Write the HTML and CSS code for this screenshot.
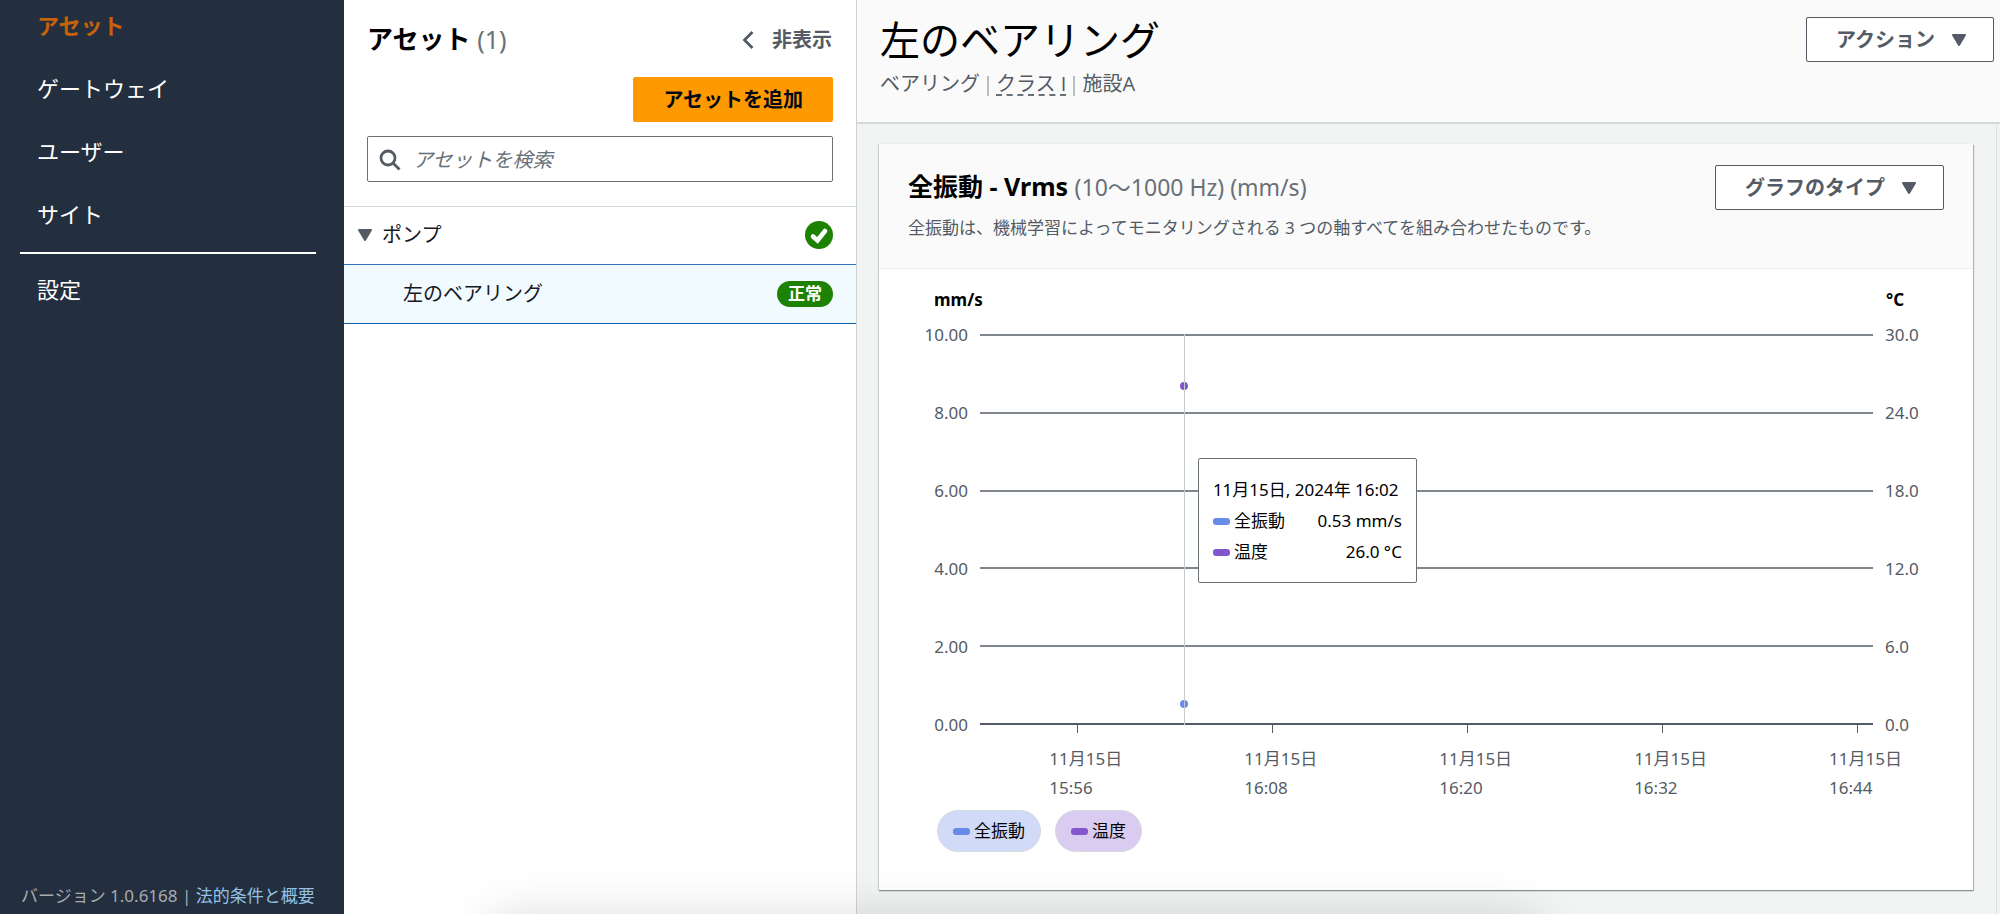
FILE: index.html
```html
<!DOCTYPE html>
<html lang="ja">
<head>
<meta charset="utf-8">
<title>アセット</title>
<link rel="stylesheet" href="styles.css">
</head>
<body>
<div class="app">
  <nav class="sidebar">
    <ul class="nav">
      <li><a class="nav-link active" href="#">アセット</a></li>
      <li><a class="nav-link" href="#">ゲートウェイ</a></li>
      <li><a class="nav-link" href="#">ユーザー</a></li>
      <li><a class="nav-link" href="#">サイト</a></li>
    </ul>
    <hr class="nav-rule">
    <ul class="nav">
      <li><a class="nav-link" href="#">設定</a></li>
    </ul>
    <footer class="version">バージョン 1.0.6168 | <a class="legal" href="#">法的条件と概要</a></footer>
  </nav>

  <section class="assets">
    <header class="assets-head">
      <div class="assets-title-row">
        <h2 class="assets-title">アセット <span class="count">(1)</span></h2>
        <button class="hide-button" type="button">
          <svg class="icon" viewBox="0 0 20 20" aria-hidden="true"><path d="M13.500 2 L5.500 10 L13.500 18" fill="none" stroke="currentColor" stroke-width="2.800"/></svg>
          非表示
        </button>
      </div>
      <button class="add-button" type="button">アセットを追加</button>
      <label class="search">
        <svg class="search-icon" viewBox="0 0 22 22" aria-hidden="true"><circle cx="9" cy="9" r="7" fill="none" stroke="currentColor" stroke-width="2.800"/><path d="M14 14 L20.500 20.500" stroke="currentColor" stroke-width="2.800"/></svg>
        <input class="search-input" type="text" placeholder="アセットを検索" aria-label="アセットを検索">
      </label>
    </header>
    <div class="tree-row">
      <svg class="caret" viewBox="0 0 14 12" aria-hidden="true"><path d="M1 1 H13 L7 11 Z" fill="currentColor" stroke="currentColor" stroke-width="2" stroke-linejoin="round"/></svg>
      <span class="tree-name">ポンプ</span>
      <svg class="check" viewBox="0 0 28 28" role="img" aria-label="正常"><circle cx="14" cy="14" r="14" fill="#1d8102"/><path d="M8 15.500 L12.500 19.500 L20 10" fill="none" stroke="#fff" stroke-width="4.600" stroke-linecap="round"/></svg>
    </div>
    <div class="tree-row selected">
      <span class="tree-name child">左のベアリング</span>
      <span class="badge">正常</span>
    </div>
  </section>

  <main class="detail">
    <header class="detail-head">
      <div>
        <h1 class="detail-title">左のベアリング</h1>
        <p class="detail-meta"><span>ベアリング</span><span class="bar"></span><span class="class-term">クラス I</span><span class="bar"></span><span>施設A</span></p>
      </div>
      <button class="menu-button" type="button">アクション
        <svg class="caret" viewBox="0 0 14 12" aria-hidden="true"><path d="M1 1 H13 L7 11 Z" fill="currentColor" stroke="currentColor" stroke-width="2" stroke-linejoin="round"/></svg>
      </button>
    </header>
    <div class="detail-body">
      <article class="card">
        <header class="card-head">
          <div>
            <h2 class="card-title">全振動 - Vrms <span class="units">(10～1000 Hz) (mm/s)</span></h2>
            <p class="card-text">全振動は、機械学習によってモニタリングされる 3 つの軸すべてを組み合わせたものです。</p>
          </div>
          <button class="menu-button" type="button">グラフのタイプ
            <svg class="caret" viewBox="0 0 14 12" aria-hidden="true"><path d="M1 1 H13 L7 11 Z" fill="currentColor" stroke="currentColor" stroke-width="2" stroke-linejoin="round"/></svg>
          </button>
        </header>
        <div class="chart">
          <div class="unit unit-left">mm/s</div>
          <div class="unit unit-right">°C</div>
          <div class="axis axis-left"><span>10.00</span><span>8.00</span><span>6.00</span><span>4.00</span><span>2.00</span><span>0.00</span></div>
          <div class="plot">
            <div class="grid"><i></i><i></i><i></i><i></i><i></i><i class="base"></i></div>
            <span class="dot temp"></span>
            <span class="dot vib"></span>
            <span class="cursor"></span>
            <div class="tooltip">
              <div class="tip-row">11月15日, 2024年 16:02</div>
              <div class="tip-row"><span class="key"><i class="swatch vib"></i>全振動</span><span>0.53 mm/s</span></div>
              <div class="tip-row"><span class="key"><i class="swatch temp"></i>温度</span><span>26.0 °C</span></div>
            </div>
          </div>
          <div class="axis axis-right"><span>30.0</span><span>24.0</span><span>18.0</span><span>12.0</span><span>6.0</span><span>0.0</span></div>
          <div class="time">
            <div class="ticks"><i></i><i></i><i></i><i></i><i></i></div>
            <div class="times">
              <span>11月15日<br>15:56</span><span>11月15日<br>16:08</span><span>11月15日<br>16:20</span><span>11月15日<br>16:32</span><span>11月15日<br>16:44</span>
            </div>
          </div>
        </div>
        <div class="legend">
          <button class="chip chip-vib" type="button"><i class="swatch vib"></i>全振動</button>
          <button class="chip chip-temp" type="button"><i class="swatch temp"></i>温度</button>
        </div>
      </article>
    </div>
  </main>
</div>
<div class="bottom-shade"></div>
</body>
</html>
```
FILE: styles.css
```css
* { box-sizing: border-box; }
body {
  margin: 0;
  font-family: "Noto Sans", "Noto Sans CJK JP", sans-serif;
  font-size: 20px;
  line-height: 28px;
  color: #16191f;
  overflow: hidden;
}
h1, h2, p, ul { margin: 0; padding: 0; }
ul { list-style: none; }
a { text-decoration: none; }
button { font: inherit; cursor: pointer; }

.app { display: flex; min-height: 100vh; }

/* Sidebar */
.sidebar {
  flex: 0 0 344px;
  display: flex;
  flex-direction: column;
  background: #232f3e;
  padding: 0 28px 4px 20px;
}
.nav-link {
  display: block;
  height: 63px;
  padding: 9px 17px;
  font-size: 22px;
  line-height: 32px;
  color: #fff;
}
.nav-link.active { color: #c7610a; font-weight: 700; }
.nav-rule {
  width: 100%;
  height: 2px;
  margin: 0 0 10px;
  border: 0;
  background: #fff;
}
.version {
  margin-top: auto;
  padding-left: 1px;
  font-size: 17px;
  color: #a9abae;
  white-space: nowrap;
}
.legal { color: #94c1e6; }

/* Asset list */
.assets {
  flex: 0 0 513px;
  background: #fff;
  border-right: 1px solid #cdd2d2;
}
.assets-head {
  display: flex;
  flex-direction: column;
  padding: 20px 23px 24px;
  border-bottom: 1px solid #d5dbdb;
}
.assets-title-row {
  display: flex;
  justify-content: space-between;
  align-items: center;
  height: 40px;
  margin-bottom: 17px;
}
.assets-title { font-size: 26px; line-height: 40px; padding-bottom: 3px; color: #000; }
.count { font-size: 25px; font-weight: 400; color: #687078; }
.hide-button {
  display: flex;
  align-items: center;
  gap: 13px;
  padding: 0 1px 0 0;
  border: 0;
  background: none;
  font-weight: 700;
  color: #545b64;
}
.icon { width: 20px; height: 20px; }
.add-button {
  align-self: flex-end;
  height: 45px;
  padding: 0 30px;
  border: 0;
  border-radius: 2px;
  background: #ff9900;
  font-weight: 700;
  color: #000716;
}
.search {
  display: flex;
  align-items: center;
  gap: 12px;
  height: 46px;
  margin-top: 14px;
  padding: 1px 11px 0;
  border: 1px solid #687078;
  border-radius: 2px;
  background: #fff;
}
.search-icon { width: 22px; height: 22px; color: #545b64; }
.search-input {
  flex: 1;
  min-width: 0;
  padding: 0;
  border: 0;
  outline: 0;
  background: none;
  font: inherit;
}
.search-input::placeholder { color: #687078; font-style: italic; }
.tree-row {
  display: flex;
  align-items: center;
  height: 57px;
  padding: 0 23px 2px 14px;
}
.tree-row.selected {
  height: 60px;
  padding-bottom: 0;
  border-top: 1px solid #2f74c0;
  border-bottom: 1px solid #0b5cad;
  background: #f1faff;
}
.caret { width: 14px; height: 12px; color: #545b64; }
.tree-name { flex: 1; padding-left: 10px; }
.tree-name.child { padding-left: 45px; }
.check { width: 28px; height: 28px; }
.badge {
  padding: 0 11px;
  border-radius: 13px;
  background: #1d8102;
  font-size: 17px;
  line-height: 26px;
  font-weight: 700;
  color: #fff;
}

/* Detail */
.detail {
  flex: 1;
  min-width: 0;
  display: flex;
  flex-direction: column;
  background: #f2f3f3;
}
.detail-head {
  display: flex;
  justify-content: space-between;
  align-items: flex-start;
  padding: 12px 6px 26px 23px;
  border-bottom: 2px solid #d5d9d9;
  background: #fafafa;
}
.detail-head .menu-button { margin-top: 5px; }
.detail-title { font-size: 40px; line-height: 56px; font-weight: 400; color: #000; }
.detail-meta {
  display: flex;
  gap: 7px;
  height: 28px;
  font-family: "Open Sans", "Noto Sans CJK JP", sans-serif;
  line-height: 32px;
  color: #545b64;
}
.bar { width: 2px; height: 20px; margin-top: 8px; background: #b9bec2; }
.class-term { border-bottom: 2px dashed #687078; }
.menu-button {
  display: flex;
  align-items: center;
  gap: 17px;
  height: 45px;
  padding: 0 27px 0 29px;
  border: 1px solid #545b64;
  border-radius: 2px;
  background: #fff;
  font-weight: 700;
  color: #545b64;
}
.detail-body {
  flex: 1;
  margin-right: 3px;
  padding: 20px 23px 24px 22px;
  border-right: 1px solid #dfe2e2;
}
.card {
  background: #fff;
  box-shadow: 0 1px 1px #879596, 1px 1px 1px #b5bbbb, -1px 0 1px #d5dbdb;
}
.card-head {
  display: flex;
  justify-content: space-between;
  align-items: flex-start;
  padding: 19px 29px 23px;
  border-bottom: 1px solid #eaeded;
  background: #fafafa;
}
.card-head .menu-button { margin-top: 2px; }
.card-title { font-size: 25px; line-height: 46px; color: #000; }
.units { font-size: 23px; font-weight: 400; color: #687078; }
.card-text { font-size: 17px; line-height: 35px; color: #545b64; }

/* Chart */
.chart {
  display: grid;
  grid-template-columns: 101px 1fr 100px;
  padding-top: 17px;
  font-size: 17px;
  color: #545b64;
}
.unit { height: 48px; font-weight: 700; color: #000; }
.unit-left { padding-left: 55px; }
.unit-right { grid-column: 3; padding-left: 13px; }
.axis {
  display: flex;
  flex-direction: column;
  justify-content: space-between;
  margin: -13px 0 -14px;
}
.axis-left { align-items: flex-end; padding-right: 12px; }
.axis-right { padding-left: 12px; }
.plot { position: relative; height: 391px; }
.grid {
  display: flex;
  flex-direction: column;
  justify-content: space-between;
  height: 100%;
}
.grid i { height: 2px; background: #80868e; }
.grid .base { background: #545b64; }
.dot {
  position: absolute;
  left: 22.9%;
  width: 8px;
  height: 8px;
  margin: -4px;
  border-radius: 50%;
}
.dot.temp { top: 13.4%; }
.dot.vib { top: 94.7%; }
.cursor {
  position: absolute;
  left: 22.9%;
  top: 0;
  bottom: 0;
  width: 1px;
  background: #c6cacb;
}
.tooltip {
  position: absolute;
  left: 24.4%;
  top: 124px;
  width: 219px;
  padding: 15px 14px;
  border: 1px solid #687078;
  border-radius: 2px;
  background: #fff;
  color: #000;
}
.tip-row {
  display: flex;
  justify-content: space-between;
  line-height: 31px;
  white-space: nowrap;
}
.key { display: flex; align-items: center; }
.swatch {
  width: 17px;
  height: 7px;
  margin: 1px 4px 0 0;
  border-radius: 3px;
}
.vib { background: #688ae8; }
.temp { background: #8456ce; }
.time { grid-column: 2; }
.ticks, .times {
  display: grid;
  grid-template-columns: repeat(5, 24.5%);
  padding-left: 10.9%;
}
.ticks i { height: 8px; border-left: 1px solid #545b64; }
.times span {
  margin-left: -28px;
  padding-top: 11px;
  line-height: 29px;
  white-space: nowrap;
}

/* Legend */
.legend { display: flex; gap: 14px; padding: 8px 58px 38px; }
.chip {
  display: flex;
  align-items: center;
  height: 42px;
  padding: 0 15px;
  border: 1px solid #d5dbdb;
  border-radius: 21px;
  font-size: 17px;
  color: #000;
}
.chip-vib { background: #d1daf7; }
.chip-temp { background: #daccf0; }

.bottom-shade {
  position: fixed;
  left: 490px;
  right: 460px;
  top: 100%;
  height: 60px;
  border-radius: 20px;
  box-shadow: 0 4px 50px rgba(0, 0, 0, 0.16);
  pointer-events: none;
}
```
